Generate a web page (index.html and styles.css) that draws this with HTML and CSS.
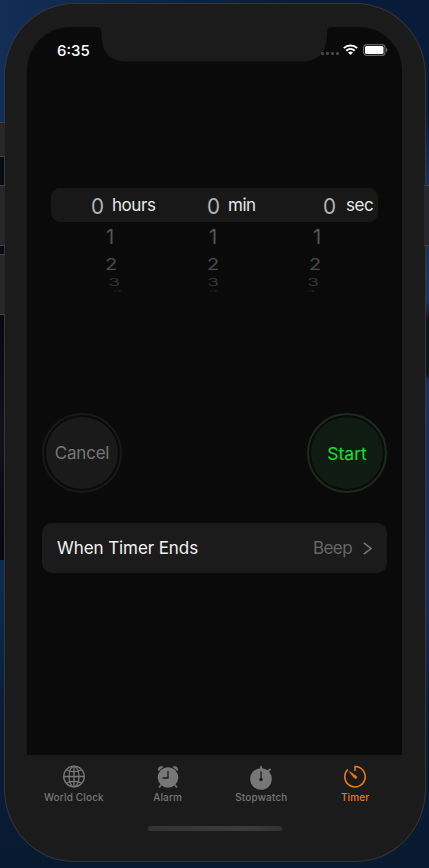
FILE: index.html
```html
<!DOCTYPE html>
<html lang="en">
<head>
<meta charset="utf-8">
<title>Timer</title>
<link rel="stylesheet" href="styles.css">
</head>
<body>
<i class="side-button mute"></i>
<i class="side-button volume-up"></i>
<i class="side-button volume-down"></i>
<i class="side-button power"></i>
<main class="phone">
  <section class="screen">
    <svg class="notch" width="240" height="35" viewBox="0 0 240 35"><path d="M0 0C5 0 7.500 1 7.500 6C7.500 24 14 34.500 33 34.500H207C226 34.500 233 24 233 6C233 1 235 0 240 0Z" fill="#1b1b1b"/></svg>
    <header class="status">
      <span class="time">6:35</span>
      <span class="signal"><i></i><i></i><i></i><i></i></span>
      <svg class="wifi" width="15" height="11" viewBox="0 0 15 11" fill="none" stroke="#fff" stroke-width="2"><path d="M.8 4.100C4.500.500 10.500.500 14.200 4.100M3.300 6.800C5.700 4.500 9.300 4.500 11.700 6.800"/><path d="M5 8.500Q7.500 6.700 10 8.500L7.500 11Z" fill="#fff" stroke="none"/></svg>
      <svg class="battery" width="25" height="12" viewBox="0 0 25 12"><rect x=".6" y=".6" width="21.400" height="10.800" rx="3" fill="none" stroke="#626262" stroke-width="1.200"/><rect x="2" y="2" width="18.500" height="8" rx="1.500" fill="#fff"/><path d="M23 4Q24.600 4.300 24.600 6T23 8Z" fill="#626262"/></svg>
    </header>
    <div class="picker">
      <div class="selection">
        <span class="value">0</span><span class="unit">hours</span>
        <span class="value">0</span><span class="unit">min</span>
        <span class="value">0</span><span class="unit seconds">sec</span>
      </div>
      <div class="wheels">
        <div class="wheel left"><b class="r1">1</b><b class="r2">2</b><b class="r3">3</b><b class="r4">4</b></div>
        <div class="wheel middle"><b class="r1">1</b><b class="r2">2</b><b class="r3">3</b><b class="r4">4</b></div>
        <div class="wheel right"><b class="r1">1</b><b class="r2">2</b><b class="r3">3</b><b class="r4">4</b></div>
      </div>
    </div>
    <div class="actions">
      <div class="action cancel"><span>Cancel</span></div>
      <div class="action start"><span>Start</span></div>
    </div>
    <div class="setting">
      <span class="label">When Timer Ends</span>
      <span class="sound">Beep</span>
      <svg width="9" height="13" viewBox="0 0 9 13" fill="none" stroke="#777" stroke-width="1.500"><path d="M.8.800L8 6.500L.8 12.200"/></svg>
    </div>
  </section>
  <nav class="tabs">
    <div class="tab"><svg width="24" height="26" viewBox="0 0 24 26" fill="none" stroke="#777" stroke-width="1.300"><circle cx="12" cy="12.500" r="10.300"/><ellipse cx="12" cy="12.500" rx="5" ry="10.200"/><path d="M12 2.300V22.700M1.800 12.500H22.200M4.500 6Q12 9.500 19.500 6M4.500 19Q12 15.500 19.500 19"/></svg><span>World Clock</span></div>
    <div class="tab"><svg width="24" height="26" viewBox="0 0 24 26"><path d="M2.200 7.200C1.200 3.500 4 1.200 7.700 2.800ZM21.800 7.200C22.800 3.500 20 1.200 16.300 2.800Z" fill="#777"/><path d="M5 21L3 23.500M19 21L21 23.500" stroke="#777" stroke-width="1.800"/><circle cx="12" cy="13.500" r="10.300" fill="#777"/><path d="M12 7V14H6.500" fill="none" stroke="#1b1b1b" stroke-width="1.300"/></svg><span>Alarm</span></div>
    <div class="tab"><svg width="24" height="26" viewBox="0 0 24 26"><circle cx="12" cy="15" r="10.800" fill="#777"/><path d="M12 3V7M19 7L21 5.500" stroke="#777" stroke-width="2" stroke-linecap="round"/><path d="M12 7.500V15" stroke="#1b1b1b" stroke-width="1.300"/><circle cx="12" cy="15.500" r="1.700" fill="#1b1b1b"/></svg><span>Stopwatch</span></div>
    <div class="tab active"><svg width="24" height="26" viewBox="0 0 24 26" fill="none" stroke="#ed790f" stroke-width="1.600"><path d="M12 7V2.500A10.200 10.200 0 1 1 4.800 5.500"/><path d="M6.500 7.500L13.700 12.500Q14.300 14.500 12.300 14.500Q11 14.200 6.500 7.500Z" fill="#ed790f" stroke-width=".7"/></svg><span>Timer</span></div>
  </nav>
  <div class="home"></div>
</main>
</body>
</html>
```

FILE: styles.css
```css
* { box-sizing: border-box; }
body {
  margin: 0; height: 868px; overflow: hidden; position: relative; padding: 3px 4px;
  font-family: Inter, "Liberation Sans", sans-serif;
  background:
    linear-gradient(90deg, #142d54, #10284c 90px, #081c39 300px, #081c3900 301px) 0 0 / 100% 122px no-repeat,
    linear-gradient(#080c15, #080b12) 0 122px / 8px 193px no-repeat,
    linear-gradient(#08090e, #10111a 50%, #07080c) 0 315px / 8px 245px no-repeat,
    linear-gradient(#122b50, #0b1c36 160px, #081a30) 0 560px / 200px 308px no-repeat,
    linear-gradient(#081c39 0 110px, #17335f 185px 245px, #1a3867 300px, #10141f 320px 375px, #18315b 380px, #172e58 600px, #091a33 740px, #081a30);
}
.phone {
  position: relative; width: 422px; height: 859px; padding: 23px 22px 0;
  background: #1b1b1b; border: 1px solid #343638; border-radius: 70px / 73px;
}
.side-button { position: absolute; z-index: 2; width: 5px; left: 0; background: #272729; border: solid #414143; border-width: 1px 0; }
.mute { top: 122px; height: 35px; }
.volume-up { top: 185px; height: 61px; }
.volume-down { top: 254px; height: 61px; }
.power { top: 185px; height: 61px; left: auto; right: 0; }
.screen { position: relative; height: 728px; width: 375px; background: #0a0a0a; border-radius: 43px 43px 0 0; overflow: hidden; }
.notch { position: absolute; left: 67px; top: 0; }
.status { position: relative; height: 35px; padding: 17px 14px 0 30px; display: flex; align-items: flex-start; }
.time { color: #fff; font-size: 15px; line-height: 13px; font-weight: 550; width: 264px; }
.signal { display: flex; gap: 2px; margin-top: 8px; width: 23px; }
.signal i { width: 3px; height: 3px; background: #454545; border-radius: 1px; }
.wifi { margin: 0 5px 0 -1px; }
.picker { margin: 126px 24px 0; height: 198px; }
.selection {
  height: 34px; width: 327px; border-radius: 9px; background: #181818; display: grid;
  padding-left: 21px; align-items: center; grid-template-columns: 40px 76px 40px 76px 40px 1fr;
}
.value { text-align: center; font-size: 22px; line-height: 34px; color: #b3b3b3; padding-left: 12px; transform: scaleX(.94); }
.unit { font-size: 17px; line-height: 35px; letter-spacing: -.45px; color: #e9e9e9; }
.seconds { padding-left: 2px; }
.wheels { display: flex; width: 327px; padding-left: 44px; gap: 72px; }
.wheel { width: 30px; display: grid; grid-template-rows: 29px 25px 12px 6px; justify-items: center; align-items: center; }
.wheel b { font-weight: 400; font-size: 20px; line-height: 20px; color: #555; }
.wheel .r1 { transform: translateX(var(--a)); }
.wheel .r2 { color: #4b4b4b; transform: translateX(var(--b)) scale(1, .82); }
.wheel .r3 { color: #353535; transform: translateX(var(--c)) scale(.95, .5); }
.wheel .r4 { color: #222; transform: translateX(var(--d)) scale(.9, .1); }
.left { --a: 0px; --b: 1px; --c: 4px; --d: 7px; }
.middle { --a: 1px; --b: 1px; --c: 1px; --d: 1px; }
.right { --a: 3px; --b: 1px; --c: -1px; --d: -4px; }
.actions { display: flex; justify-content: space-between; padding: 0 15px; margin-top: 27px; }
.action { width: 80px; height: 80px; border-radius: 50%; border: 2px solid; padding: 2px; font-size: 17.500px; }
.action span { display: flex; align-items: center; justify-content: center; height: 72px; border-radius: 50%; }
.cancel { border-color: #191919; color: #777; font-size: 17px; letter-spacing: -.2px; }
.cancel span { background: #1a1a1a; }
.start { border-color: #1c2b20; color: #14e42a; }
.start span { background: #101b13; }
.setting { margin: 30px 15px 0; height: 50px; border-radius: 10px; background: #1b1b1b; display: flex; align-items: center; padding: 0 15px; font-size: 17px; letter-spacing: -.08px; }
.label { color: #f2f2f2; flex: 1; }
.sound { color: #666; letter-spacing: -.6px; margin-right: 11px; }
.tabs { display: grid; grid-template-columns: repeat(4, 1fr); height: 71px; padding-top: 9px; width: 375px; }
.tab { display: flex; flex-direction: column; align-items: center; color: #777; font-size: 10px; line-height: 12px; font-weight: 500; letter-spacing: .15px; gap: 1px; white-space: nowrap; }
.active { color: #ed790f; }
.home { width: 134px; height: 5px; border-radius: 3px; margin-left: 121px; background: linear-gradient(90deg, #333, #3b3b3b 70%, #333); }
```
